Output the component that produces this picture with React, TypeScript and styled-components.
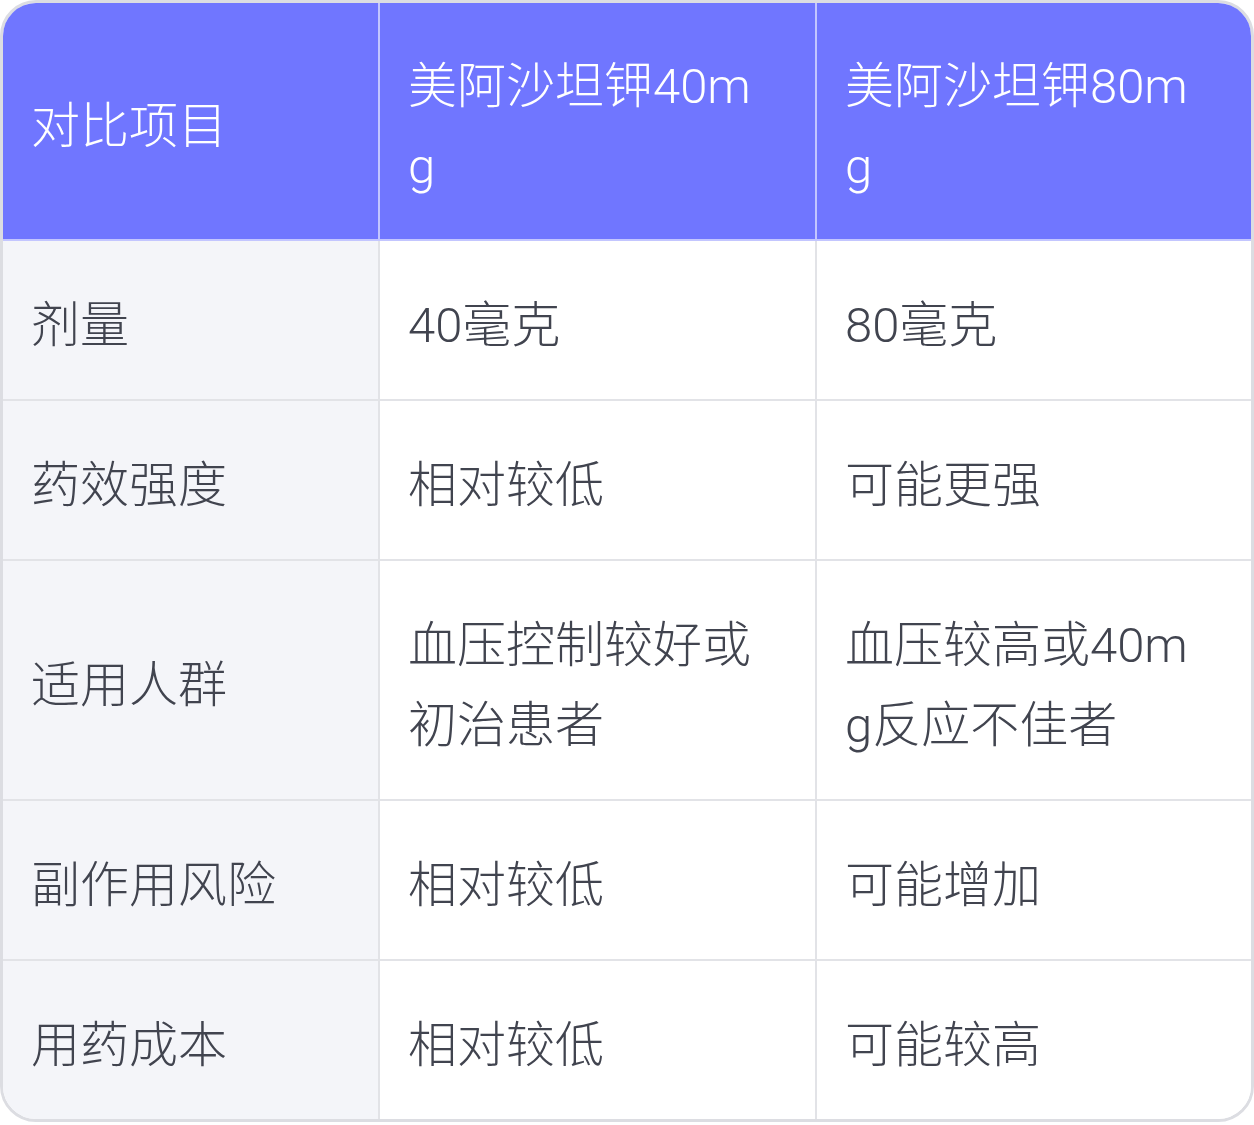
import React from "react";
import styled, { createGlobalStyle } from "styled-components";

const Global = createGlobalStyle`
  html, body { margin: 0; padding: 0; background: #ffffff; }
  body { font-family: Roboto, "Noto Sans CJK SC", sans-serif; }
`;

const Frame = styled.div`
  width: 1254px;
  box-sizing: border-box;
  border: 3px solid #dcdde2;
  border-radius: 36px;
  overflow: hidden;
  background: #ffffff;
`;

const Table = styled.table`
  width: 100%;
  border-collapse: separate;
  border-spacing: 0;
  table-layout: fixed;
  font-family: Roboto, "Noto Sans CJK SC", sans-serif;
  font-size: 49px;
  line-height: 80px;
  font-weight: 300;
`;

const Col = styled.col<{ $w: number }>`
  width: ${(p) => p.$w}px;
`;

const HeadCell = styled.th<{ $last?: boolean }>`
  background: #7076ff;
  color: #ffffff;
  font-weight: 300;
  text-align: left;
  vertical-align: middle;
  padding: 44px 49px 32px 28px;
  border-right: ${(p) => (p.$last ? "none" : "2px solid #c3c6ff")};
  border-bottom: 2px solid #c3c6ff;
  word-break: break-all;
`;

const Cell = styled.td<{ $label?: boolean; $last?: boolean; $bottom?: boolean }>`
  background: ${(p) => (p.$label ? "#f4f5f9" : "#ffffff")};
  color: #41444f;
  text-align: left;
  vertical-align: middle;
  padding: 45px 49px 33px 28px;
  border-right: ${(p) => (p.$last ? "none" : "2px solid #e2e3e7")};
  border-bottom: ${(p) => (p.$bottom ? "none" : "2px solid #e2e3e7")};
  word-break: break-all;
`;

const rows: [string, string, string][] = [
  ["剂量", "40毫克", "80毫克"],
  ["药效强度", "相对较低", "可能更强"],
  ["适用人群", "血压控制较好或初治患者", "血压较高或40mg反应不佳者"],
  ["副作用风险", "相对较低", "可能增加"],
  ["用药成本", "相对较低", "可能较高"],
];

export default function App() {
  return (
    <>
      <Global />
      <Frame>
        <Table>
          <colgroup>
            <Col $w={377} />
            <Col $w={437} />
            <Col $w={434} />
          </colgroup>
          <thead>
            <tr>
              <HeadCell>对比项目</HeadCell>
              <HeadCell>美阿沙坦钾40mg</HeadCell>
              <HeadCell $last>美阿沙坦钾80mg</HeadCell>
            </tr>
          </thead>
          <tbody>
            {rows.map((r, i) => (
              <tr key={r[0]}>
                <Cell $label $bottom={i === rows.length - 1}>{r[0]}</Cell>
                <Cell $bottom={i === rows.length - 1}>{r[1]}</Cell>
                <Cell $last $bottom={i === rows.length - 1}>{r[2]}</Cell>
              </tr>
            ))}
          </tbody>
        </Table>
      </Frame>
    </>
  );
}
